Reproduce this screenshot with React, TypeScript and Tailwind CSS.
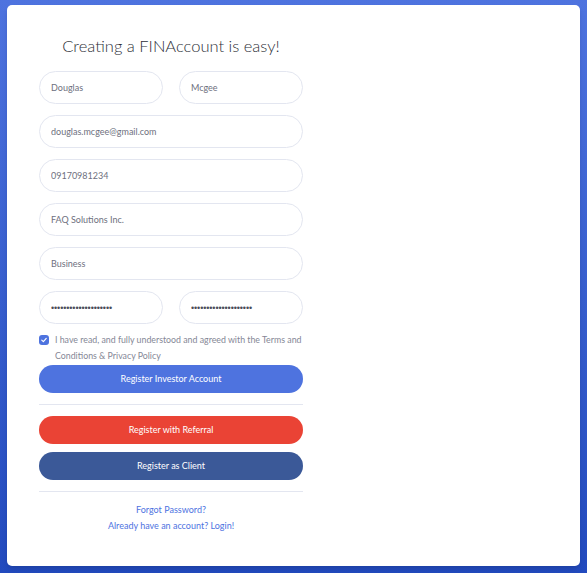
import { useState } from 'react';

const font = { fontFamily: 'Lato, "Noto Sans", "Liberation Sans", sans-serif' };

const Field = ({ value, secret = false }: { value: string; secret?: boolean }) => (
  <input
    type="text"
    defaultValue={secret ? '•'.repeat(value.length) : value}
    className={`h-[33px] w-full rounded-full border border-[#e3e6f0] bg-white px-[11px] text-[9px] outline-none ${
      secret
        ? 'font-["Liberation_Sans",sans-serif] tracking-[-0.1px] text-[#4a4c58]'
        : 'text-[#6e707e]'
    }`}
  />
);

const Divider = () => <hr className="border-t border-[#e3e6f0]" />;

export default function App() {
  const [agreed, setAgreed] = useState(true);

  return (
    <div
      className="flex min-h-[573px] w-full bg-gradient-to-b from-[#4e73df] to-[#224abe] pt-[5px] pr-[7px] pb-[7px] pl-[7px]"
      style={font}
    >
      <div className="flex-1 rounded-[5px] bg-white pt-[29px] pl-[32px] shadow-md">
        <div className="w-[264px]">
          <h1 className="mb-[13px] text-center text-[16.5px] font-light leading-[24px] text-[#2e2f38]">
            Creating a FINAccount is easy!
          </h1>
          <div className="flex flex-col gap-[11px]">
            <div className="grid grid-cols-2 gap-[16px]">
              <Field value="Douglas" />
              <Field value="Mcgee" />
            </div>
            <Field value="douglas.mcgee@gmail.com" />
            <Field value="09170981234" />
            <Field value="FAQ Solutions Inc." />
            <Field value="Business" />
            <div className="grid grid-cols-2 gap-[16px]">
              <Field secret value="passwordpassword1234" />
              <Field secret value="passwordpassword1234" />
            </div>
          </div>

          <label className="mt-[8px] flex cursor-pointer items-start gap-[6px] text-[8.8px] leading-[16px] text-[#858796]">
            <span
              onClick={() => setAgreed(!agreed)}
              className={`mt-[3px] flex h-[10px] w-[10px] shrink-0 items-center justify-center rounded-[3px] ${
                agreed ? 'bg-[#4e73df]' : 'border border-[#d1d3e2] bg-white'
              }`}
            >
              {agreed && (
                <svg viewBox="0 0 10 10" className="h-[8px] w-[8px]">
                  <path d="M2.2 5.2 L4.2 7 L7.8 3" fill="none" stroke="white" strokeWidth="1.5" strokeLinecap="round" strokeLinejoin="round" />
                </svg>
              )}
            </span>
            <span>
              I have read, and fully understood and agreed with the Terms and Conditions &amp; Privacy Policy
            </span>
          </label>

          <button className="mt-[1px] h-[28px] w-full rounded-full bg-[#4e73df] text-[9px] text-white">
            Register Investor Account
          </button>

          <div className="mt-[11px] mb-[11px]">
            <Divider />
          </div>

          <div className="flex flex-col gap-[8px]">
            <button className="h-[28px] w-full rounded-full bg-[#ea4335] text-[9px] text-white">
              Register with Referral
            </button>
            <button className="h-[28px] w-full rounded-full bg-[#3b5998] text-[9px] text-white">
              Register as Client
            </button>
          </div>

          <div className="mt-[11px] mb-[10px]">
            <Divider />
          </div>

          <div className="flex flex-col items-center text-[9px] leading-[16px] text-[#4e73df]">
            <a href="#">Forgot Password?</a>
            <a href="#">Already have an account? Login!</a>
          </div>
        </div>
      </div>
    </div>
  );
}
